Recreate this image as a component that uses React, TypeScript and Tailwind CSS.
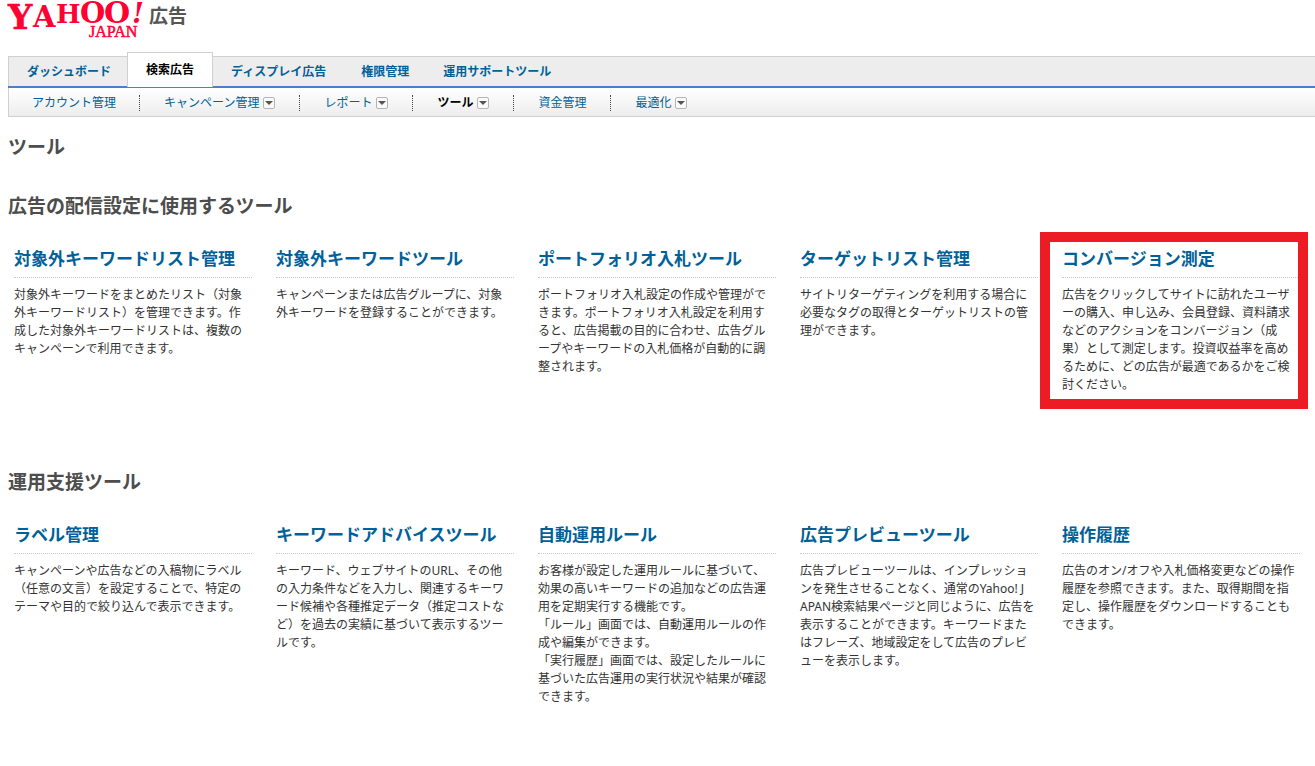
import React from "react";

type Card = { title: string; body: string[]; highlighted?: boolean };

const deliveryTools: Card[] = [
  { title: "対象外キーワードリスト管理", body: ["対象外キーワードをまとめたリスト（対象外キーワードリスト）を管理できます。作成した対象外キーワードリストは、複数のキャンペーンで利用できます。"] },
  { title: "対象外キーワードツール", body: ["キャンペーンまたは広告グループに、対象外キーワードを登録することができます。"] },
  { title: "ポートフォリオ入札ツール", body: ["ポートフォリオ入札設定の作成や管理ができます。ポートフォリオ入札設定を利用すると、広告掲載の目的に合わせ、広告グループやキーワードの入札価格が自動的に調整されます。"] },
  { title: "ターゲットリスト管理", body: ["サイトリターゲティングを利用する場合に必要なタグの取得とターゲットリストの管理ができます。"] },
  { title: "コンバージョン測定", body: ["広告をクリックしてサイトに訪れたユーザーの購入、申し込み、会員登録、資料請求などのアクションをコンバージョン（成果）として測定します。投資収益率を高めるために、どの広告が最適であるかをご検討ください。"], highlighted: true },
];

const supportTools: Card[] = [
  { title: "ラベル管理", body: ["キャンペーンや広告などの入稿物にラベル（任意の文言）を設定することで、特定のテーマや目的で絞り込んで表示できます。"] },
  { title: "キーワードアドバイスツール", body: ["キーワード、ウェブサイトのURL、その他の入力条件などを入力し、関連するキーワード候補や各種推定データ（推定コストなど）を過去の実績に基づいて表示するツールです。"] },
  { title: "自動運用ルール", body: ["お客様が設定した運用ルールに基づいて、効果の高いキーワードの追加などの広告運用を定期実行する機能です。", "「ルール」画面では、自動運用ルールの作成や編集ができます。", "「実行履歴」画面では、設定したルールに基づいた広告運用の実行状況や結果が確認できます。"] },
  { title: "広告プレビューツール", body: ["広告プレビューツールは、インプレッションを発生させることなく、通常のYahoo! J\nAPAN検索結果ページと同じように、広告を表示することができます。キーワードまたはフレーズ、地域設定をして広告のプレビューを表示します。"] },
  { title: "操作履歴", body: ["広告のオン/オフや入札価格変更などの操作履歴を参照できます。また、取得期間を指定し、操作履歴をダウンロードすることもできます。"] },
];

const subItems = [
  { label: "アカウント管理", menu: false, active: false },
  { label: "キャンペーン管理", menu: true, active: false },
  { label: "レポート", menu: true, active: false },
  { label: "ツール", menu: true, active: true },
  { label: "資金管理", menu: false, active: false },
  { label: "最適化", menu: true, active: false },
];

function Logo() {
  return (
    <svg width="137" height="40" viewBox="0 0 137 40" role="img" aria-label="Yahoo! JAPAN" fill="#ff0033" fontFamily="'DejaVu Serif', serif" fontWeight="700" className="overflow-visible">
      <text x="0" y="29" fontSize="34" stroke="#ff0033" strokeWidth="0.5">Y</text>
      <text x="25" y="27" fontSize="29">A</text>
      <text x="48" y="23" fontSize="26">H</text>
      <text x="72" y="23" fontSize="29">O</text>
      <text x="96" y="23" fontSize="30">O</text>
      <text x="124" y="23" fontSize="27" fontStyle="italic">!</text>
      <text x="81" y="37" fontSize="16" fontWeight="400" stroke="#ff0033" strokeWidth="0.5" fontFamily="'Liberation Serif', serif">JAPAN</text>
    </svg>
  );
}

function MenuButton({ label }: { label: string }) {
  return (
    <button type="button" aria-label={label} className="flex size-3 items-center justify-center rounded-xs border border-[#b5b5b5] bg-[#fafafa]">
      <svg width="8" height="4" viewBox="0 0 8 4" fill="#555"><path d="M0 0h8L4 4z" /></svg>
    </button>
  );
}

function Section({ title, cards }: { title: string; cards: Card[] }) {
  return (
    <section>
      <h2 className="px-2 text-[19px] leading-7 font-bold text-[#4d4d4d]">{title}</h2>
      <div className="mt-6 grid min-h-[196px] grid-cols-5 gap-6 pr-[15px] pl-[14px]">
        {cards.map((card) => (
          <article key={card.title} className="relative pt-px">
            <h3 className="border-b border-dotted border-[#c8c8c8] pb-1 text-[17px] leading-7 font-bold whitespace-nowrap text-[#006199]">
              <a href="#">{card.title}</a>
            </h3>
            <div className="mt-2 text-xs leading-[18px] break-all whitespace-pre-line text-[#333] [text-spacing-trim:space-all]">
              {card.body.map((line) => <p key={line}>{line}</p>)}
            </div>
            {card.highlighted && <div className="pointer-events-none absolute -top-3 -right-2 -left-[22px] h-[177px] border-10 border-[#ed1c24]" />}
          </article>
        ))}
      </div>
    </section>
  );
}

export default function App() {
  const tab = "flex h-[30px] items-center pt-0.5 whitespace-nowrap text-[#006199]";
  return (
    <div lang="ja" className="min-h-screen bg-white font-['Noto_Sans','Noto_Sans_CJK_JP',sans-serif]">
      <header className="flex h-[52px] items-start pl-2">
        <Logo />
        <span className="ml-1 pt-0.5 text-[19px] leading-7 font-bold text-[#555]">広告</span>
      </header>
      <nav className="ml-2 text-xs">
        <div className="flex h-9 items-end border-b-2 border-[#4a7fca] font-bold">
          <div className="flex h-[30px] grow items-end border-t border-l border-[#d0d0d0] bg-[#ededed]">
            <a href="#" className={tab + " pr-4 pl-[18px]"}>ダッシュボード</a>
            <a href="#" aria-current="page" className="-mb-px flex h-[35px] items-center border border-b-0 border-[#d0d0d0] bg-white px-[18px] whitespace-nowrap text-black">検索広告</a>
            <a href="#" className={tab + " px-[18px]"}>ディスプレイ広告</a>
            <a href="#" className={tab + " px-[17px]"}>権限管理</a>
            <a href="#" className={tab + " px-[17px]"}>運用サポートツール</a>
          </div>
        </div>
        <ul className="flex h-[29px] items-center border-b border-l border-[#d0d0d0] bg-linear-to-b from-white to-[#ededed] pt-0.5">
          {subItems.map((item) => (
            <li key={item.label} className="flex h-4 items-center gap-1 border-r border-dotted border-[#444] px-6 whitespace-nowrap first:px-[23px] last:border-r-0">
              <a href="#" className={item.active ? "font-bold text-black" : "text-[#006199]"}>{item.label}</a>
              {item.menu && <MenuButton label={item.label} />}
            </li>
          ))}
        </ul>
      </nav>
      <main className="pt-4">
        <h1 className="px-2 text-[19px] leading-7 font-bold text-[#4d4d4d]">ツール</h1>
        <div className="mt-[31px] flex flex-col gap-7">
          <Section title="広告の配信設定に使用するツール" cards={deliveryTools} />
          <Section title="運用支援ツール" cards={supportTools} />
        </div>
      </main>
    </div>
  );
}
